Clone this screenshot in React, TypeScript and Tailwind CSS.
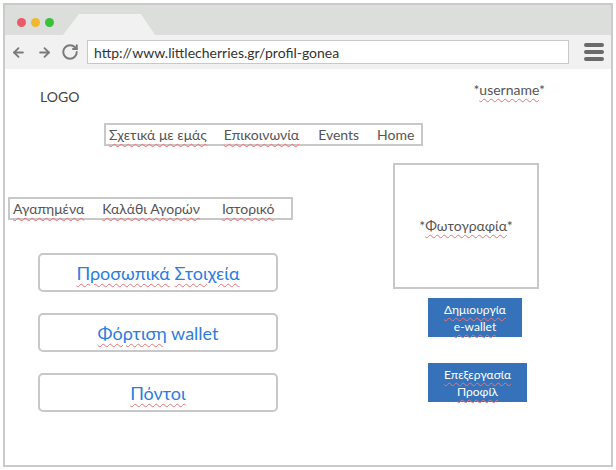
import { ArrowLeft, ArrowRight, RotateCw } from 'lucide-react';

const spell = 'underline decoration-wavy decoration-[#e8747c] decoration-1 underline-offset-[3px]';

function Chrome() {
  return (
    <div className="flex flex-col">
      {/* tab strip */}
      <div className="relative h-[30px] bg-[#dcdedc]">
        <div className="flex items-center gap-[5px] pl-[12px] pt-[13px]">
          <span className="h-[9px] w-[9px] rounded-full bg-[#ec5a69]" />
          <span className="h-[9px] w-[9px] rounded-full bg-[#f2b72b]" />
          <span className="h-[9px] w-[9px] rounded-full bg-[#38c23a]" />
        </div>
        <svg className="absolute bottom-0 left-[58px]" width="92" height="21" viewBox="0 0 92 21">
          <polygon points="0,21 16,0 78,0 92,21" fill="#f1f1f1" />
        </svg>
      </div>
      {/* toolbar */}
      <div className="flex h-[34px] items-center bg-[#f1f1f1] pl-[6px] pr-[6px]">
        <ArrowLeft className="h-[15px] w-[15px] text-[#7a7a7a]" strokeWidth={3} />
        <ArrowRight className="ml-[11px] h-[15px] w-[15px] text-[#7a7a7a]" strokeWidth={3} />
        <RotateCw className="ml-[9px] h-[18px] w-[18px] text-[#7a7a7a]" strokeWidth={2.6} />
        <div className="ml-[8px] flex h-[24px] w-[482px] items-center border border-[#c8c8c8] bg-white pl-[6px] text-[14px] text-[#333]">
          http://www.littlecherries.gr/profil-gonea
        </div>
        <div className="ml-[15px] flex flex-col gap-[3px]">
          <span className="h-[4px] w-[20px] rounded-full bg-[#6b6b6b]" />
          <span className="h-[4px] w-[20px] rounded-full bg-[#6b6b6b]" />
          <span className="h-[4px] w-[20px] rounded-full bg-[#6b6b6b]" />
        </div>
      </div>
    </div>
  );
}

function OutlineButton({ children }: { children: React.ReactNode }) {
  return (
    <div className="flex h-[39px] w-[240px] items-center justify-center rounded-[5px] border-2 border-[#c8c8c8] text-[18px] text-[#2b7de0]">
      {children}
    </div>
  );
}

function BlueButton({ w, top, bottom }: { w: string; top: string; bottom: string }) {
  return (
    <div className={`flex h-[39px] ${w} flex-col items-center justify-center bg-[#3572b9] text-[12px] leading-[17px] text-white`}>
      <span className={spell}>{top}</span>
      <span className={spell}>{bottom}</span>
    </div>
  );
}

export default function App() {
  return (
    <div className="h-[470px] w-[616px] bg-white p-[3px]" style={{ fontFamily: 'Lato, "Open Sans", sans-serif' }}>
      <div className="flex h-[464px] w-[610px] flex-col border-2 border-[#cacaca]">
        <Chrome />
        <div className="flex flex-col text-[14px] leading-[20px] text-[#555]">
          {/* logo + username */}
          <div className="flex items-start justify-between">
            <span className="ml-[35px] mt-[18px] text-[#444]">LOGO</span>
            <span className="mr-[66px] mt-[11px]">
              *<span className={spell}>username</span>*
            </span>
          </div>
          {/* top nav */}
          <div className="ml-[99px] mt-[16px] flex h-[23px] w-[319px] items-center gap-[17px] border-2 border-[#c8c8c8] pl-[3px]">
            <span className={spell}>Σχετικά με εμάς</span>
            <span className={spell}>Επικοινωνία</span>
            <span className="ml-[2px]">Events</span>
            <span className="ml-[1px]">Home</span>
          </div>
          <div className="flex">
            <div className="flex w-[388px] flex-col">
              <div className="ml-[3px] mt-[51px] flex h-[23px] w-[285px] items-center gap-[18px] border-2 border-[#c8c8c8] pl-[3px]">
                <span className={spell}>Αγαπημένα</span>
                <span className={spell}>Καλάθι Αγορών</span>
                <span className="ml-[4px]">
                  <span className={spell}>Ιστορικό</span>
                </span>
              </div>
              <div className="ml-[33px] mt-[33px] flex flex-col gap-[21px]">
                <OutlineButton>
                  <span className={spell}>Προσωπικά</span>&nbsp;<span className={spell}>Στοιχεία</span>
                </OutlineButton>
                <OutlineButton>
                  <span className={spell}>Φόρτιση</span>&nbsp;wallet
                </OutlineButton>
                <OutlineButton>
                  <span className={spell}>Πόντοι</span>
                </OutlineButton>
              </div>
            </div>
            <div className="flex flex-col">
              <div className="mt-[17px] flex h-[126px] w-[146px] items-center justify-center border-2 border-[#c8c8c8]">
                <span>
                  *<span className={spell}>Φωτογραφία</span>*
                </span>
              </div>
              <div className="ml-[35px] mt-[9px]">
                <BlueButton w="w-[94px]" top="Δημιουργία" bottom="e-wallet" />
              </div>
              <div className="ml-[35px] mt-[26px]">
                <BlueButton w="w-[99px]" top="Επεξεργασία" bottom="Προφίλ" />
              </div>
            </div>
          </div>
        </div>
      </div>
    </div>
  );
}
